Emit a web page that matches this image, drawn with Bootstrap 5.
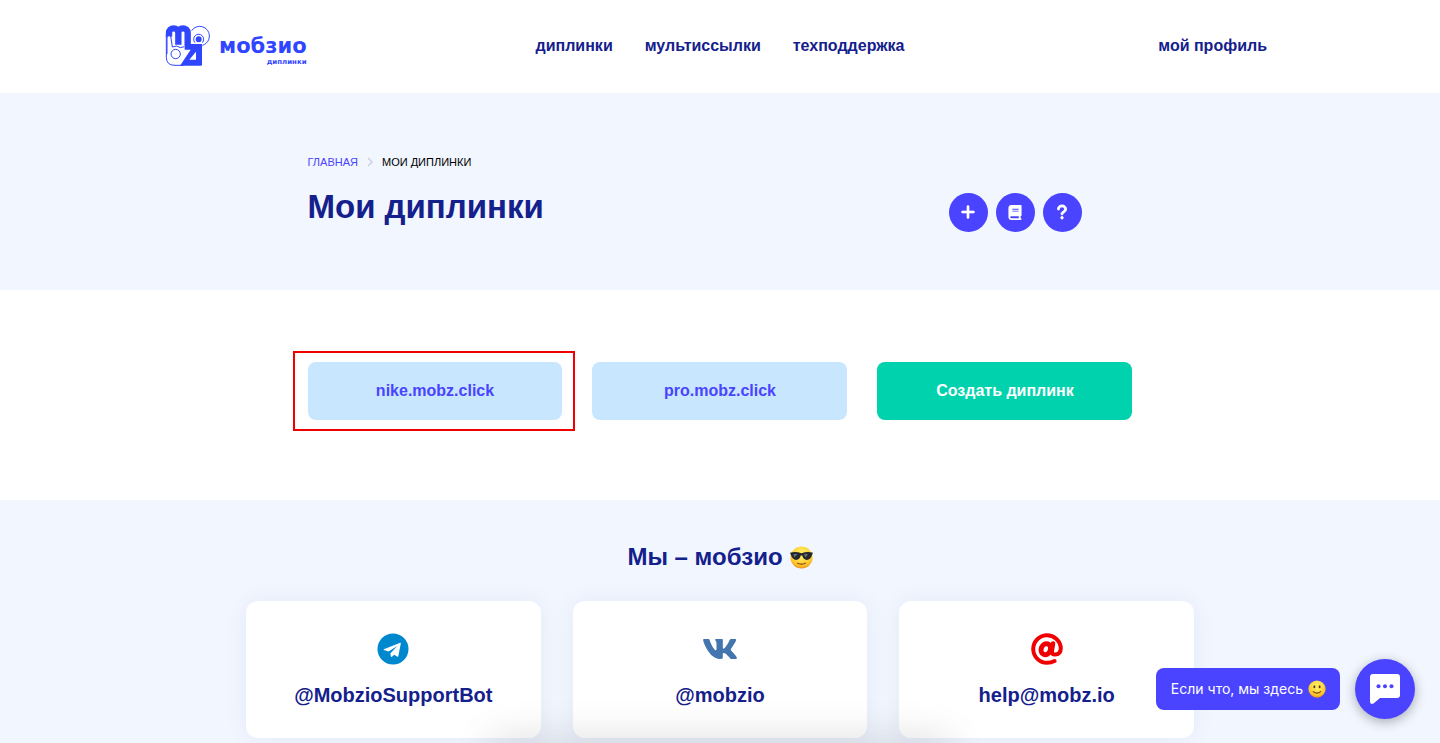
<!DOCTYPE html>
<html lang="ru">
<head>
<meta charset="utf-8">
<meta name="viewport" content="width=device-width, initial-scale=1">
<title>Мои диплинки</title>
<link href="https://cdn.jsdelivr.net/npm/bootstrap@5.3.0/dist/css/bootstrap.min.css" rel="stylesheet">
<style>
:root { --ink: #14208c; --accent: #4a43ff; --pale: #f1f6ff; }
body { font-family: "Liberation Sans", Arial, sans-serif; color: var(--ink); background: #fff; }
a { text-decoration: none; }
.site-box { max-width: 1140px; padding-left: 15px; padding-right: 15px; }
.site-head { display: grid; grid-template-columns: 1fr auto 1fr; min-height: 93px; padding-bottom: 2px; }
.site-nav { gap: 32px; }
.site-link { color: var(--ink); font-weight: 700; font-size: 16px; line-height: 24px; }
.brand-name { font: 700 21px/24px "DejaVu Sans", sans-serif; color: #2f45ff; }
.brand-sub { font: 700 7px/8px "DejaVu Sans", sans-serif; color: #2f45ff; }
.inner-col { width: 75%; padding: 0 15px; }
.tint { background: var(--pale); }
.hero { padding: 61px 0 58px; }
.crumbs { font-size: 11px; line-height: 16px; text-transform: uppercase; gap: 9px; margin-bottom: 15px; }
.crumbs a { color: var(--accent); }
.crumbs span { color: #000; }
.page-title { font-size: 33px; line-height: 40px; font-weight: 700; margin-bottom: 5px; }
.round-btn { width: 39px; height: 39px; border-radius: 50%; border: 0; background: var(--accent); color: #fff; padding: 0 0 2px; }
.round-set { margin-right: 51px; gap: 8px; }
.links-area { padding: 72px 0 80px; }
.links-area .row { --bs-gutter-x: 30px; --bs-gutter-y: 30px; }
.tile { display: block; width: 100%; padding: 17px; border-radius: 8px; font-weight: 700; font-size: 16px; line-height: 24px; text-align: center; background: #c8e7ff; color: var(--accent); }
.tile-new { background: #00d2ad; color: #fff; }
.marker { position: absolute; inset: -11px -13px -11px -15px; border: 2px solid #f00000; pointer-events: none; }
.about { padding: 39px 0 5px; }
.about-title { font-size: 24px; line-height: 36px; font-weight: 700; gap: 7px; margin-bottom: 26px; }
.about-box { max-width: 980px; padding: 0 16px; }
.about-box .row { --bs-gutter-x: 32px; --bs-gutter-y: 32px; }
.contact { min-height: 137px; border-radius: 12px; background: #fff; box-shadow: 0 0 24px rgba(20, 50, 100, .06); color: var(--ink); font-size: 20px; line-height: 30px; font-weight: 700; padding: 32px 8px 8px; gap: 15px; }
.chat { position: fixed; right: 25px; bottom: 24px; gap: 15px; z-index: 5; }
.chat-note { background: var(--accent); color: #fff; border: 0; border-radius: 8px; font: 400 14px/20px Inter, sans-serif; padding: 11px 14px 11px 15px; gap: 5px; }
.chat-btn { width: 60px; height: 60px; border-radius: 50%; border: 0; background: var(--accent); box-shadow: 0 3px 12px rgba(0, 0, 0, .3); padding: 0; }
.floor-shade { position: fixed; left: 0; right: 0; bottom: 0; height: 50px; overflow: hidden; pointer-events: none; }
.floor-shade::after { content: ""; position: absolute; left: 50%; top: 50px; width: 450px; height: 30px; transform: translateX(-50%); box-shadow: 0 0 40px 4px rgba(0, 0, 0, .14); }
</style>
</head>
<body class="d-flex flex-column min-vh-100">
<header class="container-fluid site-box site-head align-items-center">
  <a href="#" class="d-flex align-items-center" aria-label="Мобзио диплинки">
    <svg width="46" height="42" viewBox="46 31 138 126" fill="none" stroke="#2f45ff">
      <path d="M50 60V128Q50 152 76 152H102" stroke-width="3"/>
      <path d="M58 66V54A14 13 0 0 1 86 54V90M86 54A14 13 0 0 1 114 54V90" stroke-width="19"/>
      <path d="M52 118V70Q52 63 58 63T64 70L68 97Q82 90 92 99L104 96" fill="#fff" stroke-width="3"/>
      <circle cx="78" cy="118" r="14" stroke-width="3"/>
      <path d="M105 88H157V150Q157 153 153 153H91L123 105H105Z" fill="#2f45ff" stroke="none"/>
      <path d="M139 111V135H119Z" fill="#fff" stroke="none"/>
      <path d="M126 48A29 29 0 1 1 158 92" stroke-width="3"/>
      <path d="M136 84A15 15 0 1 1 158 84" stroke-width="3"/>
      <circle cx="147" cy="74" r="9" fill="#2f45ff" stroke="none"/>
    </svg>
    <span class="d-flex flex-column align-items-end ms-2 pt-2"><span class="brand-name">мобзио</span><span class="brand-sub">диплинки</span></span>
  </a>
  <nav class="d-flex site-nav">
    <a class="site-link" href="#">диплинки</a>
    <a class="site-link" href="#">мультиссылки</a>
    <a class="site-link" href="#">техподдержка</a>
  </nav>
  <a class="site-link text-end pe-2" href="#">мой профиль</a>
</header>

<main class="d-flex flex-column flex-grow-1">
  <section class="tint hero">
    <div class="container-fluid site-box px-0"><div class="inner-col mx-auto">
      <nav class="d-flex align-items-center crumbs" aria-label="Навигация">
        <a href="#">Главная</a>
        <svg width="6" height="10" viewBox="0 0 6 10" fill="none" stroke="#cdd3e4" stroke-width="1.6"><path d="M1 1l4 4-4 4"/></svg>
        <span>Мои диплинки</span>
      </nav>
      <div class="d-flex justify-content-between align-items-end">
        <h1 class="page-title">Мои диплинки</h1>
        <div class="d-flex round-set pt-2">
          <button type="button" class="round-btn" aria-label="Добавить"><svg width="14" height="16" viewBox="0 0 448 512" fill="currentColor" stroke="currentColor" stroke-width="22"><path d="M256 80c0-17.700-14.300-32-32-32s-32 14.300-32 32V224H48c-17.700 0-32 14.300-32 32s14.300 32 32 32H192V432c0 17.700 14.300 32 32 32s32-14.300 32-32V288H400c17.700 0 32-14.300 32-32s-14.300-32-32-32H256V80z"/></svg></button>
          <button type="button" class="round-btn" aria-label="Инструкция"><svg width="14" height="15" viewBox="0 0 448 512" fill="currentColor"><path d="M96 0C43 0 0 43 0 96V416c0 53 43 96 96 96H384h32c17.700 0 32-14.300 32-32s-14.300-32-32-32V384c17.700 0 32-14.300 32-32V32c0-17.700-14.300-32-32-32H384 96zm0 384H352v64H96c-17.700 0-32-14.300-32-32s14.300-32 32-32zm32-240c0-8.800 7.200-16 16-16H336c8.800 0 16 7.200 16 16s-7.200 16-16 16H144c-8.800 0-16-7.200-16-16zm16 48H336c8.800 0 16 7.200 16 16s-7.200 16-16 16H144c-8.800 0-16-7.200-16-16s7.200-16 16-16z"/></svg></button>
          <button type="button" class="round-btn" aria-label="Помощь"><svg width="10" height="16" viewBox="0 0 320 512" fill="currentColor" stroke="currentColor" stroke-width="30"><path d="M80 160c0-35.300 28.700-64 64-64h32c35.300 0 64 28.700 64 64v3.600c0 21.800-11.100 42.100-29.400 53.800l-42.200 27.100c-25.200 16.200-40.400 44.100-40.400 74V320c0 17.700 14.300 32 32 32s32-14.300 32-32v-1.400c0-8.200 4.200-15.800 11-20.200l42.200-27.100c36.600-23.600 58.800-64.100 58.800-107.700V160c0-70.700-57.300-128-128-128H144C73.300 32 16 89.300 16 160c0 17.700 14.300 32 32 32s32-14.300 32-32zm80 320a40 40 0 1 0 0-80 40 40 0 1 0 0 80z"/></svg></button>
        </div>
      </div>
    </div></div>
  </section>

  <section class="links-area">
    <div class="container-fluid site-box px-0"><div class="inner-col mx-auto">
      <div class="row row-cols-1 row-cols-md-3">
        <div class="col"><div class="position-relative"><a class="tile" href="#">nike.mobz.click</a><span class="marker"></span></div></div>
        <div class="col"><a class="tile" href="#">pro.mobz.click</a></div>
        <div class="col"><a class="tile tile-new" href="#">Создать диплинк</a></div>
      </div>
    </div></div>
  </section>

  <section class="tint about flex-grow-1">
    <div class="container-fluid about-box">
      <h2 class="about-title d-flex justify-content-center align-items-center">Мы – мобзио
        <svg width="23" height="23" viewBox="0 0 24 24" role="img" aria-label="😎"><defs><radialGradient id="sun" cx=".5" cy=".35" r=".65"><stop offset=".3" stop-color="#ffe85a"/><stop offset=".8" stop-color="#ffc226"/><stop offset="1" stop-color="#e8921b"/></radialGradient></defs><circle cx="12" cy="12" r="11.500" fill="url(#sun)"/><path d="M0 7Q6 5.500 12 7.500 18 5.500 24 7L23 9.500Q21.500 14.500 17.500 14.500 14 14.500 12.800 10H11.200Q10 14.500 6.500 14.500 2.500 14.500 1 9.500Z" fill="#24272b"/><path d="M3.500 8.500L8 8.300 4.500 12ZM14.500 8.500L19 8.300 16 12Z" fill="#6d7278"/><path d="M8 18Q12 20 16 18" fill="none" stroke="#8a4a12" stroke-width="1.300" stroke-linecap="round"/></svg>
      </h2>
      <div class="row row-cols-1 row-cols-md-3">
        <div class="col"><a href="#" class="contact d-flex flex-column align-items-center">
          <svg width="32" height="32" viewBox="0 0 32 32"><circle cx="16" cy="16" r="15.500" fill="#0088cf"/><path d="M6.800 16.300L23.200 9.800Q24 9.600 23.800 10.600L21.300 23.200Q21 24.200 20 23.600L17.200 21.700 15.300 23.600Q14 24.500 13.800 23L13.300 20.400 20.300 12.900 11.600 18.500 7 17.100Q6 16.800 6.800 16.300Z" fill="#fff"/></svg>
          <span>@MobzioSupportBot</span></a></div>
        <div class="col"><a href="#" class="contact d-flex flex-column align-items-center">
          <svg width="36" height="32" viewBox="0 0 576 512" fill="#4376ae"><path d="M545 117.700c3.700-12.500 0-21.700-17.800-21.700h-58.900c-15 0-21.900 7.900-25.600 16.700 0 0-30 73.100-72.400 120.500-13.700 13.700-20 18.100-27.500 18.100-3.700 0-9.400-4.400-9.400-16.900V117.700c0-15-4.200-21.700-16.600-21.700h-92.600c-9.400 0-15 7-15 13.500 0 14.200 21.200 17.500 23.400 57.500v86.800c0 19-3.400 22.500-10.900 22.500-20 0-68.600-73.400-97.400-157.400-5.800-16.300-11.500-22.900-26.600-22.900H38.800c-16.800 0-20.200 7.900-20.200 16.700 0 15.600 20 93.100 93.100 195.500C160.400 378.100 229 416 291.400 416c37.500 0 42.100-8.400 42.100-22.900 0-66.800-3.400-73.100 15.400-73.100 8.700 0 23.700 4.400 58.700 38.100 40 40 46.600 57.900 69 57.900h58.900c16.800 0 25.300-8.400 20.400-25-11.200-34.900-86.900-106.700-90.300-111.500-8.700-11.200-6.200-16.200 0-26.200.1-.1 72-101.300 79.400-135.600z"/></svg>
          <span>@mobzio</span></a></div>
        <div class="col"><a href="#" class="contact d-flex flex-column align-items-center">
          <svg width="32" height="32" viewBox="0 0 32 32" fill="none" stroke="#f00000" stroke-linecap="round" stroke-linejoin="round"><path d="M23.500 28Q20 29.800 16 29.800A13.800 13.800 0 1 1 29.800 15Q29.800 21.500 24 21.500 20.500 21.500 21 18.500" stroke-width="4"/><path d="M22 10.500L20.400 19.500" stroke-width="4.600"/><ellipse cx="14.800" cy="16.200" rx="4.600" ry="5.600" transform="rotate(20 14.800 16.200)" stroke-width="5"/></svg>
          <span>help@mobz.io</span></a></div>
      </div>
    </div>
  </section>
</main>

<div class="floor-shade"></div>
<aside class="chat d-flex align-items-center">
  <button type="button" class="chat-note d-flex align-items-center">Если что, мы здесь
    <svg width="18" height="18" viewBox="0 0 24 24" role="img" aria-label="🙂"><circle cx="12" cy="12" r="11.500" fill="url(#sun)"/><ellipse cx="8.500" cy="9" rx="1.300" ry="2" fill="#5d3510"/><ellipse cx="15.500" cy="9" rx="1.300" ry="2" fill="#5d3510"/><path d="M7 15.500Q12 19.500 17 15.500" fill="none" stroke="#7a4310" stroke-width="1.500" stroke-linecap="round"/></svg>
  </button>
  <button type="button" class="chat-btn" aria-label="Открыть чат">
    <svg width="30" height="30" viewBox="0 0 30 30"><path d="M3 0H27Q30 0 30 3V21Q30 24 27 24H10L3.500 29.500Q0 31 0 27.500V3Q0 0 3 0Z" fill="#fff"/><g fill="#4a43ff"><circle cx="8.500" cy="12.300" r="2"/><circle cx="15" cy="12.300" r="2"/><circle cx="21.500" cy="12.300" r="2"/></g></svg>
  </button>
</aside>
<script src="https://cdn.jsdelivr.net/npm/bootstrap@5.3.0/dist/js/bootstrap.bundle.min.js"></script>
</body>
</html>
